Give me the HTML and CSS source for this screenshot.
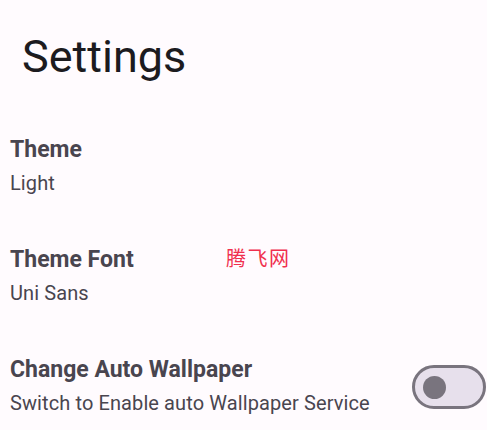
FILE: index.html
```html
<!DOCTYPE html>
<html lang="en">
<head>
    <meta charset="UTF-8">
    <meta name="viewport" content="width=device-width, initial-scale=1.0">
    <title>Settings</title>
    <link rel="stylesheet" href="styles.css">
</head>
<body>
    <div class="page">
        <h1 class="page-title">Settings</h1>

        <div class="setting">
            <div class="setting-text">
                <div class="setting-name">Theme</div>
                <div class="setting-value">Light</div>
            </div>
        </div>

        <div class="setting">
            <div class="setting-text">
                <div class="setting-name">Theme Font</div>
                <div class="setting-value">Uni Sans</div>
            </div>
        </div>

        <div class="setting">
            <div class="setting-text">
                <div class="setting-name">Change Auto Wallpaper</div>
                <div class="setting-value">Switch to Enable auto Wallpaper Service</div>
            </div>
            <!-- switch (off) -->
            <div class="switch">
                <div class="knob"></div>
            </div>
        </div>
    </div>

    <div class="watermark">腾飞网</div>
</body>
</html>
```

FILE: styles.css
```css
body {
    margin: 0;
    padding: 0;
    background-color: #fffbfe;
    font-family: Roboto, "Noto Sans", sans-serif;
    color: #49454f;
    overflow: hidden;
}

.page {
    display: flex;
    flex-direction: column;
}

.page-title {
    margin: 0;
    padding: 31px 0 0 22px;
    height: 111px;
    box-sizing: border-box;
    font-size: 45px;
    font-weight: 400;
    line-height: 52px;
    color: #1c1b1f;
}

.setting {
    display: flex;
    align-items: center;
    justify-content: space-between;
    height: 110px;
    padding: 0 1px 0 10px;
    box-sizing: border-box;
}

.setting-name {
    font-size: 23px;
    font-weight: 700;
    line-height: 30px;
}

.setting-value {
    font-size: 20px;
    line-height: 28px;
    margin-top: 4px;
    letter-spacing: 0.1px;
}

.switch {
    width: 74px;
    height: 44px;
    box-sizing: border-box;
    border: 3px solid #79747e;
    border-radius: 22px;
    background-color: #e7e0ec;
    display: flex;
    align-items: center;
    padding-left: 8px;
    margin-top: 2px;
}

.knob {
    width: 23px;
    height: 23px;
    border-radius: 50%;
    background-color: #79747e;
}

.watermark {
    position: absolute;
    left: 226px;
    top: 243px;
    font-family: "Noto Sans CJK SC", sans-serif;
    font-size: 20px;
    color: #f0304e;
    letter-spacing: 1.5px;
}
```
